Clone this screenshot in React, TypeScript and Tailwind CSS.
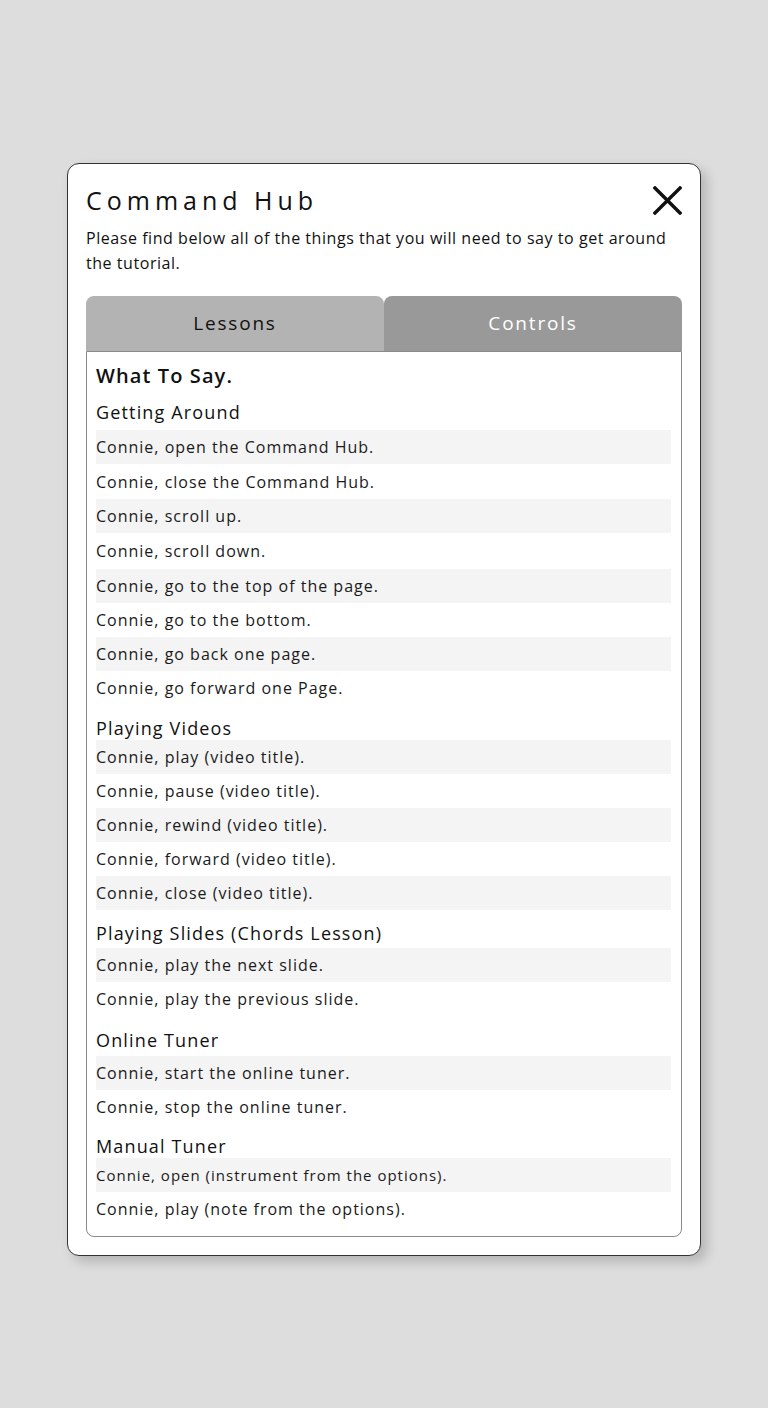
import React from "react";

type Section = { title: string; rows: string[]; heights?: string[]; mt: string; mb: string };

const sections: Section[] = [
  {
    title: "Getting Around",
    mt: "mt-[10px]",
    mb: "mb-[6px]",
    heights: ["h-[34px]", "h-[35px]", "h-[34px]", "h-[36px]", "h-[34px]", "h-[34px]", "h-[34px]", "h-[34px]"],
    rows: [
      "Connie, open the Command Hub.",
      "Connie, close the Command Hub.",
      "Connie, scroll up.",
      "Connie, scroll down.",
      "Connie, go to the top of the page.",
      "Connie, go to the bottom.",
      "Connie, go back one page.",
      "Connie, go forward one Page.",
    ],
  },
  {
    title: "Playing Videos",
    mt: "mt-[11px]",
    mb: "mb-0",
    rows: [
      "Connie, play (video title).",
      "Connie, pause (video title).",
      "Connie, rewind (video title).",
      "Connie, forward (video title).",
      "Connie, close (video title).",
    ],
  },
  {
    title: "Playing Slides (Chords Lesson)",
    mt: "mt-[11px]",
    mb: "mb-[3px]",
    rows: ["Connie, play the next slide.", "Connie, play the previous slide."],
  },
  {
    title: "Online Tuner",
    mt: "mt-[12px]",
    mb: "mb-[4px]",
    rows: ["Connie, start the online tuner.", "Connie, stop the online tuner."],
  },
  {
    title: "Manual Tuner",
    mt: "mt-[10px]",
    mb: "mb-0",
    rows: [
      "Connie, open (instrument from the options).",
      "Connie, play (note from the options).",
    ],
  },
];

export default function App() {
  return (
    <div
      className="min-h-screen w-full bg-[#dddddd] pt-[163px]"
      style={{ fontFamily: '"Open Sans", "Noto Sans", sans-serif' }}
    >
      <div className="mx-auto w-[634px] rounded-[12px] border border-[#333333] bg-white px-[18px] pt-[20px] pb-[18px] shadow-[6px_6px_12px_rgba(0,0,0,0.18)]">
        <div className="flex h-[32px] items-center justify-between">
          <h1 className="text-[25px] leading-[32px] font-normal tracking-[5px] text-[#111111]">
            Command Hub
          </h1>
          <svg width="29" height="29" viewBox="0 0 29 29">
            <path d="M2 2 L27 27 M27 2 L2 27" stroke="#111111" strokeWidth="3.4" strokeLinecap="square" />
          </svg>
        </div>
        <p className="mt-[10px] text-[16px] leading-[25px] font-normal tracking-[0.55px] text-[#111111]">
          Please find below all of the things that you will need to say to get around the tutorial.
        </p>

        <div className="mt-[20px] flex h-[55px]">
          <div className="flex flex-1 items-center justify-center rounded-t-[8px] bg-[#b3b3b3] text-[19px] tracking-[1.8px] text-[#111111]">
            Lessons
          </div>
          <div className="flex flex-1 items-center justify-center rounded-t-[8px] bg-[#999999] text-[19px] font-medium tracking-[1.8px] text-white">
            Controls
          </div>
        </div>

        <div className="rounded-b-[8px] border border-[#8a8a8a] pt-[10px] pb-[10px] pl-[9px] pr-[10px] text-[#1a1a1a]">
          <div className="h-[28px] text-[20px] leading-[28px] font-semibold tracking-[1.1px] text-[#111111]">
            What To Say.
          </div>
          {sections.map((s) => (
            <div key={s.title}>
              <div
                className={`${s.mt} ${s.mb} h-[24px] text-[18px] leading-[24px] font-medium tracking-[1.15px] text-[#111111]`}
              >
                {s.title}
              </div>
              {s.rows.map((r, i) => (
                <div
                  key={r}
                  className={`flex ${s.heights ? s.heights[i] : "h-[34px]"} items-center tracking-[1px] ${
                    i % 2 === 0 ? "bg-[#f4f4f4]" : "bg-white"
                  } ${r.startsWith("Connie, open (") ? "text-[15px]" : "text-[16px]"}`}
                >
                  {r}
                </div>
              ))}
            </div>
          ))}
        </div>
      </div>
    </div>
  );
}
